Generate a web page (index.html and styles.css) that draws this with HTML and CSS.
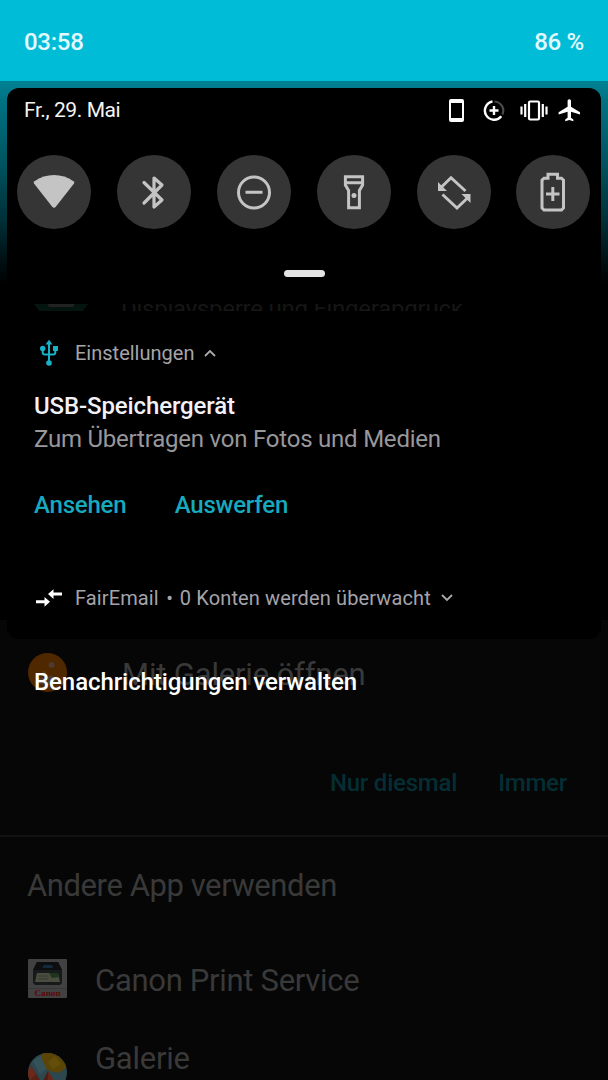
FILE: index.html
```html
<!DOCTYPE html>
<html lang="de">
<head>
<meta charset="utf-8">
<title>Benachrichtigungen</title>
<link rel="stylesheet" href="styles.css">
</head>
<body>
<div class="screen">
  <header class="status"><span>03:58</span><span>86 %</span></header>
  <div class="stage">
    <div class="app">
      <div class="app-glow"></div>
      <div class="chooser">
        <div class="open-row">
          <svg class="orange" width="39" height="39" viewBox="0 0 39 39"><circle cx="19.5" cy="19.5" r="19.5" fill="#502800"/><circle cx="23.500" cy="12" r="3" fill="#4b3b30"/><path d="M12 22l4-5 2 6zM10 25h9l4-3 4 4v5H10z" fill="#4b3b30"/></svg>
          <span class="t-open">Mit Galerie öffnen</span>
        </div>
        <div class="choice"><span class="t-once">Nur diesmal</span><span class="t-always">Immer</span></div>
        <h2 class="other"><span class="t-other">Andere App verwenden</span></h2>
        <div class="app-row first">
          <svg width="39" height="39" viewBox="0 0 39 39"><rect width="39" height="39" rx="1" fill="#414142"/><rect y="29" width="39" height="1" fill="#383839"/><path d="M9 3h21l4 8v13l-2 2H7l-2-2V11z" fill="#171a1a"/><path d="M9 3h21l4 8H5z" fill="#0c0e0f"/><path d="M16 6h8l1 3H14z" fill="#16293a"/><path d="M9 14h21l2 9H7z" fill="#4a4d3d"/><path d="M21 14h9l1 4-7 1z" fill="#1d351f"/><path d="M11 17h9M10 20h10" stroke="#303b34"/><text x="6.500" y="37" class="brand" textLength="26" lengthAdjust="spacingAndGlyphs">Canon</text></svg>
          <span class="t-canon">Canon Print Service</span>
        </div>
        <div class="app-row second">
          <svg width="39" height="39" viewBox="0 0 39 39"><defs><clipPath id="disc"><circle cx="19.5" cy="19.5" r="19.5"/></clipPath></defs><g clip-path="url(#disc)"><path fill="#2c474d" d="M0 0h39v39H0z"/><path d="M5 8l9-6 6 12-8 8z" fill="#35525a"/><path d="M13 0h26v14l-8 6-12-3-6-13z" fill="#5a4506"/><path d="M20 9l7-6 6 8-8 5z" fill="#634f0b"/><path d="M3 13l11 17-3 9H0V20z" fill="#592015"/><path d="M3 13l5 8-8 8V18z" fill="#6b2a19"/><path d="M20 18l13 21H12z" fill="#692517"/><path d="M20 18l-6 12 5 9z" fill="#4d1b12"/></g></svg>
          <span class="t-gal">Galerie</span>
        </div>
      </div>
    </div>

    <main class="shade">
      <section class="panel">
        <div class="top">
          <span class="t-date">Fr., 29. Mai</span>
          <svg class="sys" width="134" height="26" viewBox="0 0 134 26" fill="none" stroke="#fff">
            <path d="M3 1h11a2 2 0 012 2v19a2 2 0 01-2 2H3a2 2 0 01-2-2V3a2 2 0 012-2zM3 5v15h11V5z" fill="#fff" stroke="none" fill-rule="evenodd"/>
            <path d="M46.500 3.500a9.200 9.200 0 017.900 13" stroke="#4a4a4a" stroke-width="2.200"/>
            <path d="M44.500 3.500a9.200 9.200 0 108.800 14.800M46 8v9M41.500 12.500h9" stroke-width="2.400"/>
            <rect x="81" y="3.500" width="10" height="18" rx="1.200" stroke-width="2.200"/>
            <path d="M77.200 6v13M94.800 6v13M73.500 8.500v8M98.500 8.500v8" stroke-width="2.200"/>
            <path d="M132 16.500v-2.300l-9-5.500V3c0-1-.7-1.800-1.700-1.800S119.600 2 119.600 3v5.700l-9 5.500v2.300l9-2.700v6l-2.400 1.800v1.600l4.100-1.200 4.100 1.200v-1.600l-2.400-1.800v-6z" fill="#fff" stroke="none"/>
          </svg>
        </div>
        <div class="tiles">
          <div class="tile"><svg viewBox="0 0 74 74"><path d="M17 28.500Q16.200 27.300 17.500 26.200C29 17.800 45 17.800 56.500 26.200Q57.800 27.300 57 28.500L39 51.500Q37 54 35 51.500z" fill="#c4c4c4"/></svg></div>
          <div class="tile"><svg viewBox="0 0 74 74"><path d="M27 27.500L45 45L37 52V23L45 30L27 48" class="ln round"/></svg></div>
          <div class="tile"><svg viewBox="0 0 74 74"><circle cx="37" cy="37.500" r="15.500" class="ln"/><path d="M28.500 37.200h17" class="ln"/></svg></div>
          <div class="tile"><svg viewBox="0 0 74 74"><path d="M28.400 21.700h17.200v8.300l-3.200 5.500v17.300H31.600V35.500L28.400 30zM28.400 27.700h17.200" class="ln"/><circle cx="37" cy="40.500" r="2.500" fill="#c4c4c4"/></svg></div>
          <div class="tile"><svg viewBox="0 0 74 74"><path d="M48.500 36L34 22.700L24.500 32M25.500 39.500L40 53L50.500 43" class="ln"/><path d="M21 27v9h9zM53.500 48v-9h-9z" fill="#c4c4c4"/></svg></div>
          <div class="tile"><svg viewBox="0 0 74 74"><path d="M32 23.200v-4h9.500v4h4l2 2V53l-2 2H28l-2-2V25.200l2-2zM36.800 32v14M30 39h13.500" class="ln"/></svg></div>
        </div>
        <div class="handle"></div>
        <div class="peek"><svg width="54" height="7" viewBox="0 0 54 7"><path d="M0 0h54l-5 7H5z" fill="#04140f"/><rect x="14" y="-4" width="26" height="7" rx="2" fill="#222"/></svg><span class="t-peek">Displaysperre und Fingerabdruck</span></div>
        <article class="usb">
          <div class="head">
            <svg class="usb-icon" width="18" height="28" viewBox="0 0 18 28" fill="none" stroke="#17b2c8" stroke-width="2"><path d="M9 3v20M2.700 9v4.500q0 2 2 2h8.600q2 0 2-2V9"/><path d="M5.500 5.500L9 .7l3.500 4.800zM13 7h5v5h-5z" fill="#17b2c8" stroke="none"/><circle cx="2.700" cy="9.500" r="2.700" fill="#17b2c8" stroke="none"/><circle cx="9" cy="24" r="2.800" fill="#17b2c8" stroke="none"/></svg>
            <span class="t-set">Einstellungen</span>
            <svg width="12" height="8" viewBox="0 0 12 8"><path d="M1 7l5-5 5 5" fill="none" stroke="#aaa" stroke-width="1.800"/></svg>
          </div>
          <h1 class="title"><span class="t-title">USB-Speichergerät</span></h1>
          <p class="body"><span class="t-body">Zum Übertragen von Fotos und Medien</span></p>
          <div class="actions"><span class="t-view">Ansehen</span><span class="t-eject">Auswerfen</span></div>
        </article>
        <article class="fair">
          <svg width="26" height="18" viewBox="0 0 26 18" fill="#fff"><path d="M0 11.200h8.500V8l5.500 4.800-5.500 4.900v-3.500H0zM26 3.600h-8.500V.2L12 5l5.500 4.900V6.600H26z"/></svg>
          <span class="t-fair">FairEmail <span class="dot">•</span> 0 Konten werden überwacht</span>
          <svg class="down" width="12" height="8" viewBox="0 0 12 8"><path d="M1 1l5 5 5-5" fill="none" stroke="#aaa" stroke-width="1.800"/></svg>
        </article>
      </section>
      <footer class="manage"><span class="t-manage">Benachrichtigungen verwalten</span></footer>
    </main>
  </div>
</div>
</body>
</html>
```
FILE: styles.css
```css
* { box-sizing: border-box; }
body { margin: 0; background: #060606; font-family: Roboto, "Liberation Sans", sans-serif; }
svg { display: block; flex: none; }
h1, h2, p { margin: 0; font-weight: 400; }
span { white-space: nowrap; }
.screen { width: 608px; height: 1080px; overflow: hidden; display: flex; flex-direction: column; }
.status { height: 81px; flex: none; background: #00bcd7; color: #e2faff; display: flex; justify-content: space-between; padding: 30px 24px 0; font-size: 24px; line-height: 24px; font-weight: 500; letter-spacing: -0.28px; }
.stage { display: grid; grid-template-columns: 608px; height: 999px; }
.app, .shade { grid-area: 1 / 1; min-width: 0; }

.app { color: #393939; font-size: 31px; line-height: 36px; }
.app-glow { height: 539px; background: linear-gradient(#008294 0, #007282 20px, #00525e 85px, #002f37 140px, #000f12 180px, #000 204px); }
.chooser { height: 460px; background: #060606; overflow: hidden; }
.open-row { display: flex; height: 145px; padding: 33px 0 0 28px; }
.open-row .t-open { margin: 4px 0 0 55px; letter-spacing: -0.17px; }
.choice { display: flex; justify-content: flex-end; gap: 41px; height: 72px; padding-right: 41px; border-bottom: 2px solid #101112; color: #042e34; font-size: 24px; font-weight: 500; letter-spacing: -0.22px; }
.other { font-size: 31px; line-height: 36px; height: 122px; padding: 31px 0 0 27px; letter-spacing: -0.42px; }
.app-row { display: flex; gap: 28px; padding-left: 28px; }
.app-row.first { height: 94px; letter-spacing: -0.3px; }
.app-row.first span { margin-top: 4px; }
.app-row.second { letter-spacing: -0.25px; }
.app-row.second span { margin-top: -12px; }
.brand { font: bold 9px "Liberation Serif", serif; fill: #5b0808; letter-spacing: 0; }

.shade { display: flex; flex-direction: column; padding: 7px 7px 0; }
.panel { height: 551px; border-radius: 12px; background: #000; overflow: hidden; }
.top { display: flex; justify-content: space-between; height: 67px; padding: 10px 17px 0; color: #f4f4f4; font-size: 21px; line-height: 24px; letter-spacing: -0.42px; }
.top .sys { margin: 0 2px 0 0; }
.tiles { display: flex; justify-content: space-between; padding: 0 10.500px 0 10px; height: 115px; }
.tile { width: 74px; height: 74px; border-radius: 50%; background: #353535; }
.ln { fill: none; stroke: #c4c4c4; stroke-width: 3; }
.ln.round { stroke-linecap: round; stroke-linejoin: round; stroke-width: 3.2; }
.handle { width: 41px; height: 7px; margin: 0 auto 27px 277px; border-radius: 4px; background: #e4e4e4; }
.peek { display: flex; height: 7px; overflow: hidden; padding-left: 27px; gap: 33px; color: #161616; font-size: 24px; line-height: 24px; letter-spacing: -0.24px; }
.peek span { margin-top: -7px; }
.usb { padding: 28px 27px 0; height: 247px; }
.head { display: flex; align-items: center; height: 28px; color: #a5a5a8; font-size: 20px; }
.usb-icon { margin: 0 17px 0 6px; }
.head svg:last-child { margin-left: 10px; }
.title { margin-top: 25px; height: 33px; font-size: 24px; line-height: 28px; font-weight: 500; color: #f3f1f8; letter-spacing: -0.12px; }
.body { height: 66px; font-size: 24px; line-height: 28px; color: #98979b; letter-spacing: -0.22px; }
.actions { display: flex; gap: 48.500px; font-size: 24px; line-height: 28px; font-weight: 500; color: #17aabf; letter-spacing: -0.22px; }
.fair { display: flex; align-items: center; height: 80px; padding: 0 29px; color: #a5a4aa; font-size: 20px; letter-spacing: 0.12px; }
.t-fair { margin: 0 10px 0 13px; }
.dot { margin: 0 1.700px 0 2.300px; }
.manage { padding: 29px 27px 0; color: #fff; font-size: 24px; line-height: 28px; font-weight: 500; letter-spacing: -0.08px; }
```
